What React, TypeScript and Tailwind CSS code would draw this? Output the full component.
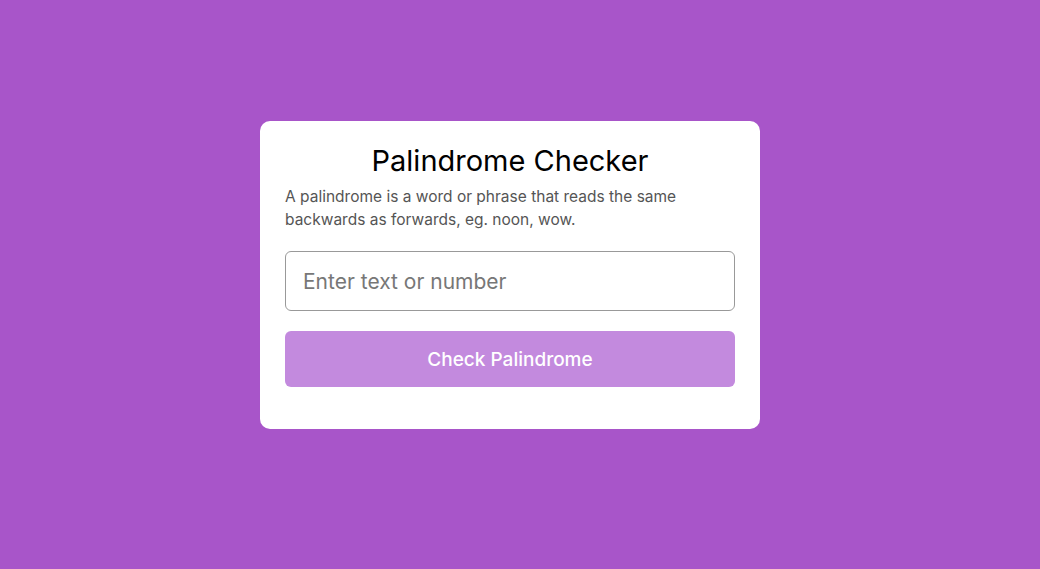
import React from "react";

export default function App() {
  return (
    <div className="w-[1040px] h-[569px] bg-[#a855c9] overflow-hidden" style={{ fontFamily: "Inter, 'Noto Sans', sans-serif" }}>
      <div className="w-[1020px] h-[549px] flex items-center justify-center">
        <div className="w-[500px] bg-white rounded-[10px] px-[25px] pt-[21px] pb-[42px] flex flex-col">
          <h1 className="text-[29px] leading-[37px] text-black text-center font-normal">Palindrome Checker</h1>
          <p className="mt-[6px] text-[15.5px] leading-[23px] text-[#555]">
            A palindrome is a word or phrase that reads the same backwards as forwards, eg. noon, wow.
          </p>
          <input
            className="mt-[20px] h-[60px] w-full border border-[#999] rounded-[6px] px-[17px] pt-[1px] text-[21px] text-[#333] placeholder:text-[#777] outline-none"
            placeholder="Enter text or number"
          />
          <button className="mt-[20px] h-[56px] w-full rounded-[6px] bg-[#c38ade] text-white text-[19px] font-medium pt-[3px]">
            Check Palindrome
          </button>
        </div>
      </div>
    </div>
  );
}
